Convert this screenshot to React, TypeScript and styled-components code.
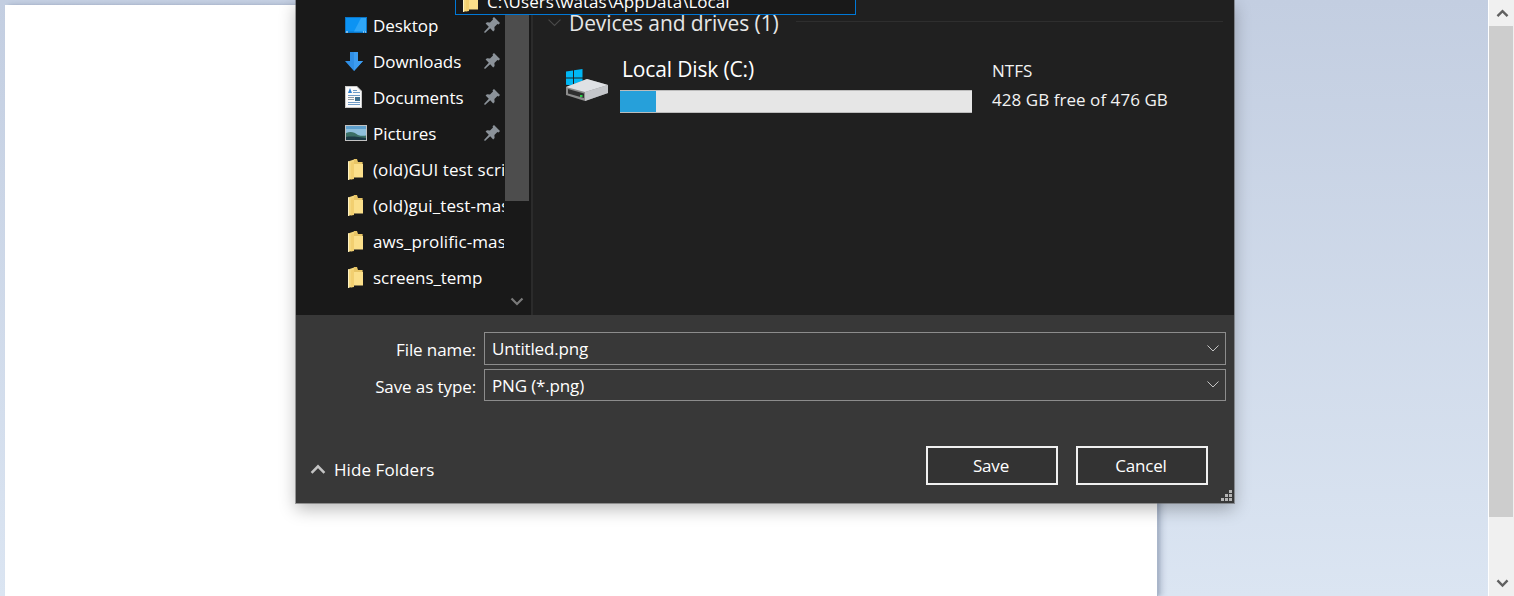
import React from "react";
import styled, { createGlobalStyle } from "styled-components";

const Global = createGlobalStyle`
  html, body { margin: 0; padding: 0; height: 100%; overflow: hidden; }
  #root { height: 100%; }
  * { box-sizing: border-box; }
  body { font-family: "Open Sans", "Noto Sans", "Liberation Sans", sans-serif; }
`;

const Page = styled.div`
  display: flex;
  width: 1514px;
  height: 596px;
  overflow: hidden;
  background: #fff;
`;
const Desktop = styled.div`
  position: relative;
  width: 1488px;
  height: 100%;
  padding: 5px 0 0 5px;
  margin-right: 1px;
  background: linear-gradient(180deg, #c3cee1 0%, #dbe5f2 100%);
`;
const Sheet = styled.div`
  width: 1152px;
  height: 100%;
  background: #fff;
  box-shadow: 1px 0 0 #a9b6ca, 3px 0 3px rgba(120, 135, 160, 0.45), 7px 0 4px rgba(120, 135, 160, 0.18);
`;
const Scrollbar = styled.div`
  display: flex;
  flex-direction: column;
  width: 25px;
  height: 100%;
  background: #f0f0f0;
`;
const ScrollButton = styled.div`
  display: flex;
  align-items: center;
  justify-content: center;
  height: 26px;
  flex: none;
  padding-left: 1px;
`;
const ScrollThumb = styled.div`
  height: 491px;
  width: 24px;
  background: #cdcdcd;
`;
const ScrollGap = styled.div`
  flex: 1;
`;

const Dialog = styled.div`
  position: absolute;
  left: 296px;
  top: 0;
  width: 938px;
  height: 503px;
  display: flex;
  flex-direction: column;
  color: #fff;
  box-shadow: 0 0 0 1px rgba(90, 90, 90, 0.55), 0 6px 16px rgba(0, 0, 0, 0.28);
`;
const Browser = styled.div`
  display: flex;
  height: 315px;
  flex: none;
  background: #202020;
`;
const NavPane = styled.div`
  display: flex;
  width: 235px;
  flex: none;
  background: #191919;
`;
const NavList = styled.ul`
  list-style: none;
  margin: 0;
  padding: 7px 0 0 49px;
  width: 209px;
  flex: none;
`;
const NavRow = styled.li`
  display: flex;
  align-items: center;
  height: 36px;
  width: 159px;
  overflow: hidden;
  white-space: nowrap;
`;
const NavIcon = styled.span<{ $inset?: boolean }>`
  display: flex;
  width: 28px;
  padding-left: ${(p) => (p.$inset ? "3px" : "0")};
  flex: none;
`;
const NavLabel = styled.span<{ $wide?: boolean }>`
  font-size: 17px;
  letter-spacing: ${(p) => (p.$wide ? "0.1px" : "-0.05px")};
  color: #fff;
  flex: none;
`;
const PinSlot = styled.span`
  display: flex;
  margin-left: auto;
  margin-right: 4px;
  flex: none;
`;
const NavScroll = styled.div`
  display: flex;
  flex-direction: column;
  width: 24px;
  flex: none;
`;
const NavThumb = styled.div`
  height: 201px;
  background: #4d4d4d;
`;
const NavArrow = styled.div`
  margin-top: 97px;
  display: flex;
  justify-content: center;
`;
const Splitter = styled.div`
  width: 2px;
  flex: none;
  background: #2b2b2b;
`;
const Content = styled.div`
  flex: 1;
  padding: 8px 11px 0 15px;
  background: #202020;
`;
const GroupHeader = styled.div`
  display: flex;
  align-items: center;
  height: 30px;
  gap: 8px;
`;
const GroupTitle = styled.span`
  font-size: 21px;
  letter-spacing: -0.1px;
  color: #e6e6e6;
  white-space: nowrap;
`;
const GroupRule = styled.div`
  flex: 1;
  height: 1px;
  margin: 0 0 3px 9px;
  background: #2e2e2e;
`;
const DriveRow = styled.div`
  display: flex;
  margin: 24px 0 0 17px;
`;
const DriveIconSlot = styled.div`
  width: 55px;
  flex: none;
  padding-top: 7px;
`;
const DriveMain = styled.div`
  width: 352px;
  flex: none;
`;
const DriveName = styled.div`
  font-size: 21px;
  line-height: 28px;
  margin: -7px 0 7px 2px;
  letter-spacing: -0.15px;
  white-space: nowrap;
`;
const Meter = styled.div`
  height: 23px;
  background: #e6e6e6;
  border-bottom: 1px solid #bcbcbc;
  border-top: 1px solid #bcbcbc;
`;
const MeterFill = styled.div`
  height: 100%;
  background: #26a0da;
`;
const DriveFacts = styled.div`
  margin-left: 20px;
  font-size: 17px;
  color: #f2f2f2;
  letter-spacing: 0.05px;
  white-space: nowrap;
`;
const Fact = styled.div<{ $first?: boolean }>`
  height: 29px;
  line-height: 26px;
  margin-top: ${(p) => (p.$first ? "-4px" : "0")};
`;

const Footer = styled.div`
  position: relative;
  flex: 1;
  padding-top: 17px;
  background: #383838;
`;
const Form = styled.div`
  display: grid;
  grid-template-columns: 180px 742px;
  grid-template-rows: 33px 32px;
  column-gap: 8px;
  row-gap: 4px;
  align-items: center;
`;
const FieldLabel = styled.label`
  text-align: right;
  font-size: 17px;
  line-height: 23px;
  padding-top: 2px;
  letter-spacing: -0.1px;
  color: #fff;
  white-space: nowrap;
`;
const Combo = styled.div`
  display: flex;
  align-items: center;
  justify-content: space-between;
  height: 100%;
  padding: 0 6px 0 7px;
  border: 1px solid #8c8c8c;
  font-size: 17px;
  letter-spacing: -0.15px;
  color: #fff;
`;
const Actions = styled.div`
  display: flex;
  align-items: center;
  margin-top: 45px;
  padding: 0 26px 0 15px;
`;
const ToggleFolders = styled.div`
  display: flex;
  align-items: center;
  gap: 9px;
  font-size: 17px;
  letter-spacing: 0.08px;
  color: #fff;
  margin-top: 7px;
`;
const ButtonGroup = styled.div`
  display: flex;
  gap: 18px;
  margin-left: auto;
`;
const DialogButton = styled.button`
  width: 132px;
  height: 39px;
  border: 2px solid #f0f0f0;
  background: #333333;
  color: #fff;
  font-family: inherit;
  font-size: 17px;
  letter-spacing: -0.2px;
  padding: 0 2px 0 0;
`;
const Grip = styled.div`
  position: absolute;
  right: 2px;
  bottom: 2px;
  display: flex;
`;
const AddressPopup = styled.div`
  position: absolute;
  left: 159px;
  top: -10px;
  width: 401px;
  height: 25px;
  display: flex;
  align-items: center;
  gap: 9px;
  padding: 0 0 2px 7px;
  background: #191919;
  border: 1px solid #0078d7;
  font-size: 17px;
  letter-spacing: 0.05px;
  color: #fff;
  white-space: nowrap;
`;
const ChevronSvg = styled.svg`
  overflow: visible;
  flex: none;
`;

const Chevron = ({ up, color, w = 12, sw = 1 }: { up?: boolean; color: string; w?: number; sw?: number }) => (
  <ChevronSvg width={w} height={w * 0.6} viewBox="0 0 12 7.2" fill="none">
    <path d={up ? "M0.5 6.7 6 1.2l5.5 5.5" : "M0.5 0.5 6 6l5.5-5.5"} stroke={color} strokeWidth={sw} />
  </ChevronSvg>
);

const Pin = () => (
  <svg width="16" height="16" viewBox="0 0 16 16">
    <path
      d="M10 0 16 6l-1.4 1.4-1.2-.4-3 3 .2 3-1.4 1.4L6.2 11.2 1 16 0 15l4.8-5.2L1.6 6.6 3 5.2l3 .2 3-3-.4-1.2z"
      fill="#8b9299"
    />
  </svg>
);

const Folder = () => (
  <svg width="15" height="21" viewBox="0 0 15 21">
    <path d="M6 0h3l1 3h4.6v15H6z" fill="#e8c566" />
    <path d="M0 2.5 6 .5V19.5L0 21z" fill="#f4d77e" />
    <path d="M0 2.5 1 2.2V20.7L0 21z" fill="#fff3c4" />
    <path d="M4 5h11v13.5H4z" fill="#fbdf8a" />
    <path d="M3 3.5 6 2.5V20L3 20.6z" fill="#f2cf70" />
  </svg>
);

const DesktopIcon = () => (
  <svg width="22" height="16" viewBox="0 0 22 16">
    <rect width="22" height="16" fill="#0a76c8" />
    <rect x="1" y="1" width="20" height="13.5" fill="#0c93f3" />
    <path d="M9 14.5 16 1h5v13.5z" fill="#2fa6f7" />
    <path d="M1 14.5h2v1H1zM18 14.5h1v1h-1zM20 14.5h1v1h-1z" fill="#e8f6ff" />
  </svg>
);
const DownloadIcon = () => (
  <svg width="18" height="19" viewBox="0 0 18 19">
    <path d="M5 0h8v9h5l-9 10L0 9h5z" fill="#2f8fe6" />
    <path d="M9 0h4v9h5l-9 10z" fill="#3c9cf0" />
  </svg>
);
const DocumentIcon = () => (
  <svg width="17" height="22" viewBox="0 0 17 22">
    <path d="M0 0h12l5 5v17H0z" fill="#c9c9c9" />
    <path d="M1 1h10.5L16 5.5V21H1z" fill="#fbfbfb" />
    <path d="M3 7l2-5 2 5z" fill="#2f80d0" />
    <path d="M8 4h4v1H8zM8 6h7v1H8zM3 9h12v1H3zM3 16h12v1H3zM3 18h12v1H3z" fill="#6f9cc8" />
    <path d="M10 11h5v4h-5z" fill="#3f6f8f" />
    <path d="M3 11h6v1H3zM3 13h6v1H3z" fill="#8f9aa5" />
  </svg>
);
const PictureIcon = () => (
  <svg width="22" height="16" viewBox="0 0 22 16">
    <rect width="22" height="16" fill="#c2c2c2" />
    <rect x="1" y="1" width="20" height="14" fill="#8fc0dc" />
    <path d="M1 8c5-2 8-1 12 2 3 1 6 1 8 .5V15H1z" fill="#3b7066" />
    <path d="M1 12c6-1 12 0 20 1v2H1z" fill="#1c3a46" />
    <path d="M1 1h20v3H1z" fill="#5fa0cc" />
  </svg>
);
const DriveIcon = () => (
  <svg width="44" height="34" viewBox="0 0 44 34">
    <path d="M1 2.5 8 1.4v7.2H1zM9 1.3 17.5 0v8.6H9zM1 9.6h7v7.2l-7-1zM9 9.6h8.5V18L9 16.9z" fill="#00b7f5" />
    <path d="M1 18 22 10 43 16V24L20 32 1 26z" fill="#8c8c8c" />
    <path d="M1 18 22 10 43 16 20 23z" fill="#dfe1e5" />
    <path d="M3 20 19 24.5V29L3 24.5z" fill="#2f2f2f" />
    <path d="M20 23 43 16V24L20 32z" fill="#c4c6ca" />
    <rect x="15" y="26" width="2.5" height="2" fill="#2bd14a" />
  </svg>
);
const GripIcon = () => (
  <svg width="11" height="11" viewBox="0 0 11 11" fill="#b5b5b5">
    <path d="M8 0h3v3H8zM4 4h3v3H4zM8 4h3v3H8zM0 8h3v3H0zM4 8h3v3H4zM8 8h3v3H8z" />
  </svg>
);

type Item = { label: string; icon: React.ReactNode; pinned?: boolean; wide?: boolean };
const items: Item[] = [
  { label: "Desktop", icon: <DesktopIcon />, pinned: true },
  { label: "Downloads", icon: <DownloadIcon />, pinned: true },
  { label: "Documents", icon: <DocumentIcon />, pinned: true },
  { label: "Pictures", icon: <PictureIcon />, pinned: true },
  { label: "(old)GUI test scripts", icon: <Folder />, wide: true },
  { label: "(old)gui_test-master", icon: <Folder />, wide: true },
  { label: "aws_prolific-master", icon: <Folder />, wide: true },
  { label: "screens_temp", icon: <Folder /> },
];

export default function App() {
  const usedPercent = 10.2;
  return (
    <Page>
      <Global />
      <Desktop>
        <Sheet />
        <Dialog>
          <Browser>
            <NavPane>
              <NavList>
                {items.map((it) => (
                  <NavRow key={it.label}>
                    <NavIcon $inset={!it.pinned}>{it.icon}</NavIcon>
                    <NavLabel $wide={it.wide}>{it.label}</NavLabel>
                    {it.pinned && (
                      <PinSlot>
                        <Pin />
                      </PinSlot>
                    )}
                  </NavRow>
                ))}
              </NavList>
              <NavScroll>
                <NavThumb />
                <NavArrow>
                  <Chevron color="#7a7a7a" w={12} sw={2.2} />
                </NavArrow>
              </NavScroll>
            </NavPane>
            <Splitter />
            <Content>
              <GroupHeader>
                <Chevron color="#4a4a4a" w={13} />
                <GroupTitle>Devices and drives (1)</GroupTitle>
                <GroupRule />
              </GroupHeader>
              <DriveRow>
                <DriveIconSlot>
                  <DriveIcon />
                </DriveIconSlot>
                <DriveMain>
                  <DriveName>Local Disk (C:)</DriveName>
                  <Meter>
                    <MeterFill style={{ width: `${usedPercent}%` }} />
                  </Meter>
                </DriveMain>
                <DriveFacts>
                  <Fact $first>NTFS</Fact>
                  <Fact>428 GB free of 476 GB</Fact>
                </DriveFacts>
              </DriveRow>
            </Content>
          </Browser>
          <Footer>
            <Form>
              <FieldLabel>File name:</FieldLabel>
              <Combo>
                Untitled.png
                <Chevron color="#c8c8c8" w={12} />
              </Combo>
              <FieldLabel>Save as type:</FieldLabel>
              <Combo>
                PNG (*.png)
                <Chevron color="#c8c8c8" w={12} />
              </Combo>
            </Form>
            <Actions>
              <ToggleFolders>
                <Chevron up color="#c4c4c4" w={14} sw={2.2} />
                Hide Folders
              </ToggleFolders>
              <ButtonGroup>
                <DialogButton>Save</DialogButton>
                <DialogButton>Cancel</DialogButton>
              </ButtonGroup>
            </Actions>
            <Grip>
              <GripIcon />
            </Grip>
          </Footer>
          <AddressPopup>
            <Folder />
            C:\Users\watas\AppData\Local
          </AddressPopup>
        </Dialog>
      </Desktop>
      <Scrollbar>
        <ScrollButton>
          <Chevron up color="#606060" w={11} sw={2.6} />
        </ScrollButton>
        <ScrollThumb />
        <ScrollGap />
        <ScrollButton>
          <Chevron color="#606060" w={11} sw={2.6} />
        </ScrollButton>
      </Scrollbar>
    </Page>
  );
}
